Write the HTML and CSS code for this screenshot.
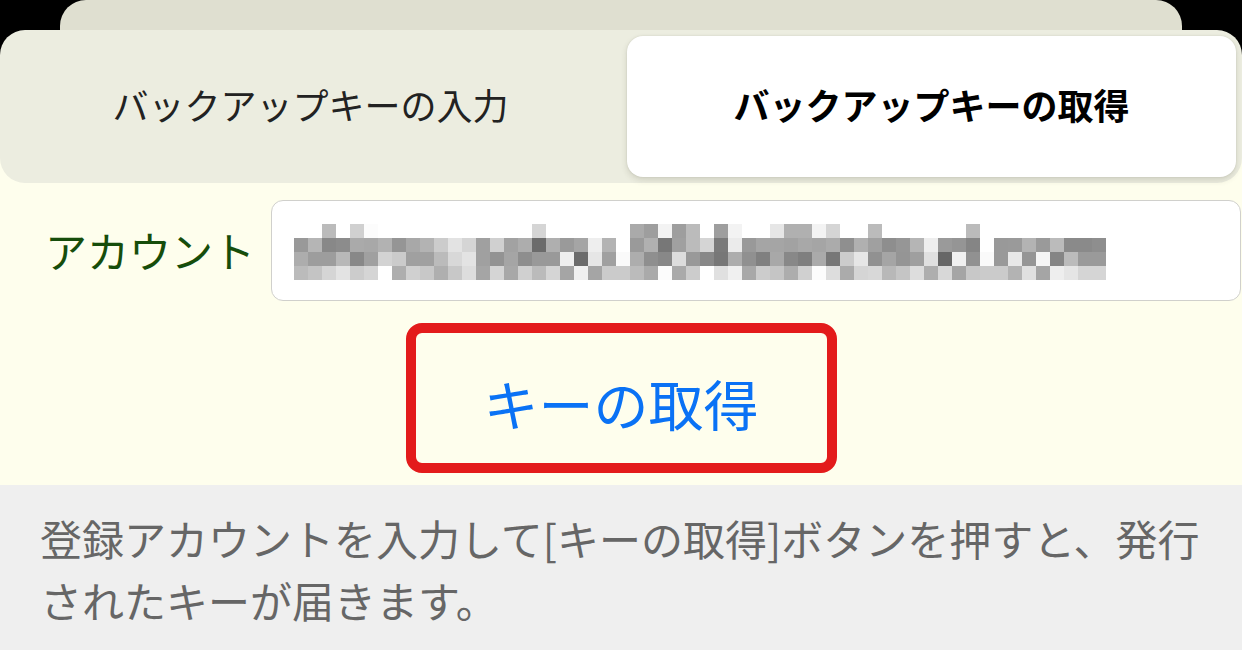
FILE: index.html
```html
<!DOCTYPE html>
<html lang="ja">
<head>
<meta charset="utf-8">
<title>バックアップキーの取得</title>
<link rel="stylesheet" href="styles.css">
</head>
<body>
<div class="backcard"></div>
<div class="tabs-wrap">
  <div class="tabs">
    <div class="tab">バックアップキーの入力</div>
    <div class="tab tab-active">バックアップキーの取得</div>
  </div>
</div>
<section class="form">
  <div class="row">
    <label class="label">アカウント</label>
    <div class="input">
      <svg class="pixels" width="812" height="56" viewBox="0 0 812 56" shape-rendering="crispEdges">
        <g>
          <rect x="28" fill="#bbb"/><rect x="56" fill="#d0d0d0"/><rect x="70" fill="#fcfcfc"/><rect x="238" fill="#d5d5d5"/><rect x="336" fill="#aaa"/><rect x="350" fill="#9e9e9e"/><rect x="364" fill="#f3f3f3"/><rect x="378" fill="#9e9e9e"/><rect x="392" fill="#bbb"/><rect x="420" fill="#9e9e9e"/><rect x="434" fill="#f3f3f3"/><rect x="476" fill="#e6e6e6"/><rect x="490" fill="#b0b0b0"/><rect x="504" fill="#b0b0b0"/><rect x="518" fill="#f3f3f3"/><rect x="532" fill="#d5d5d5"/><rect x="574" fill="#bbb"/><rect x="672" fill="#bbb"/>
        </g>
        <g transform="translate(0,14)">
          <rect x="0" fill="#999"/><rect x="14" fill="#b5b5b5"/><rect x="28" fill="#888"/><rect x="42" fill="#8c8c8c"/><rect x="56" fill="#aaa"/><rect x="70" fill="#a8a8a8"/><rect x="84" fill="#b2b2b2"/><rect x="98" fill="#959595"/><rect x="112" fill="#a8a8a8"/><rect x="126" fill="#b3b3b3"/><rect x="140" fill="#ccc"/><rect x="154" fill="#e3e3e3"/><rect x="168" fill="#d5d5d5"/><rect x="182" fill="#a0a0a0"/><rect x="196" fill="#d0d0d0"/><rect x="210" fill="#a2a2a2"/><rect x="224" fill="#adadad"/><rect x="238" fill="#6b6b6b"/><rect x="252" fill="#afafaf"/><rect x="266" fill="#9a9a9a"/><rect x="280" fill="#a5a5a5"/><rect x="294" fill="#eee"/><rect x="308" fill="#b3b3b3"/><rect x="336" fill="#9a9a9a"/><rect x="350" fill="#b0b0b0"/><rect x="364" fill="#777"/><rect x="378" fill="#a0a0a0"/><rect x="392" fill="#bbb"/><rect x="406" fill="#d5d5d5"/><rect x="420" fill="#7a7a7a"/><rect x="434" fill="#ebebeb"/><rect x="448" fill="#999"/><rect x="462" fill="#a5a5a5"/><rect x="476" fill="#a5a5a5"/><rect x="490" fill="#a2a2a2"/><rect x="504" fill="#a8a8a8"/><rect x="518" fill="#a5a5a5"/><rect x="532" fill="#ababab"/><rect x="546" fill="#8f8f8f"/><rect x="560" fill="#b0b0b0"/><rect x="574" fill="#a0a0a0"/><rect x="588" fill="#8e8e8e"/><rect x="602" fill="#969696"/><rect x="616" fill="#b5b5b5"/><rect x="630" fill="#eee"/><rect x="644" fill="#9a9a9a"/><rect x="658" fill="#959595"/><rect x="672" fill="#858585"/><rect x="700" fill="#999"/><rect x="714" fill="#9a9a9a"/><rect x="728" fill="#b3b3b3"/><rect x="742" fill="#9a9a9a"/><rect x="756" fill="#bbb"/><rect x="770" fill="#8a8a8a"/><rect x="784" fill="#8a8a8a"/><rect x="798" fill="#8e8e8e"/>
        </g>
        <g transform="translate(0,28)">
          <rect x="0" fill="#adadad"/><rect x="14" fill="#9d9d9d"/><rect x="28" fill="#9d9d9d"/><rect x="42" fill="#b8b8b8"/><rect x="56" fill="#888"/><rect x="70" fill="#a0a0a0"/><rect x="84" fill="#d3d3d3"/><rect x="98" fill="#cbcbcb"/><rect x="112" fill="#a0a0a0"/><rect x="126" fill="#a0a0a0"/><rect x="140" fill="#bbb"/><rect x="154" fill="#d8d8d8"/><rect x="168" fill="#e3e3e3"/><rect x="182" fill="#a0a0a0"/><rect x="196" fill="#939393"/><rect x="210" fill="#a5a5a5"/><rect x="224" fill="#8e8e8e"/><rect x="238" fill="#999"/><rect x="252" fill="#999"/><rect x="266" fill="#eee"/><rect x="280" fill="#6b6b6b"/><rect x="294" fill="#e6e6e6"/><rect x="308" fill="#a0a0a0"/><rect x="322" fill="#fafafa"/><rect x="336" fill="#adadad"/><rect x="350" fill="#8f8f8f"/><rect x="364" fill="#888"/><rect x="378" fill="#ddd"/><rect x="392" fill="#999"/><rect x="406" fill="#888"/><rect x="420" fill="#777"/><rect x="434" fill="#adadad"/><rect x="448" fill="#909090"/><rect x="462" fill="#808080"/><rect x="476" fill="#a8a8a8"/><rect x="490" fill="#888"/><rect x="504" fill="#7f7f7f"/><rect x="518" fill="#aaa"/><rect x="532" fill="#777"/><rect x="546" fill="#ccc"/><rect x="560" fill="#e6e6e6"/><rect x="574" fill="#919191"/><rect x="588" fill="#a5a5a5"/><rect x="602" fill="#959595"/><rect x="616" fill="#9f9f9f"/><rect x="630" fill="#e0e0e0"/><rect x="644" fill="#666"/><rect x="658" fill="#f0f0f0"/><rect x="672" fill="#919191"/><rect x="686" fill="#fafafa"/><rect x="700" fill="#999"/><rect x="714" fill="#e8e8e8"/><rect x="728" fill="#959595"/><rect x="742" fill="#f5f5f5"/><rect x="756" fill="#858585"/><rect x="770" fill="#bbb"/><rect x="784" fill="#9a9a9a"/><rect x="798" fill="#9a9a9a"/>
        </g>
        <g transform="translate(0,42)">
          <rect x="0" fill="#bbb"/><rect x="14" fill="#c4c4c4"/><rect x="28" fill="#d5d5d5"/><rect x="42" fill="#e3e3e3"/><rect x="56" fill="#ccc"/><rect x="70" fill="#d5d5d5"/><rect x="98" fill="#aeaeae"/><rect x="112" fill="#d0d0d0"/><rect x="126" fill="#c8c8c8"/><rect x="140" fill="#afafaf"/><rect x="154" fill="#c8c8c8"/><rect x="168" fill="#ddd"/><rect x="182" fill="#a5a5a5"/><rect x="196" fill="#d5d5d5"/><rect x="210" fill="#a8a8a8"/><rect x="224" fill="#d0d0d0"/><rect x="238" fill="#bbb"/><rect x="252" fill="#d5d5d5"/><rect x="266" fill="#a5a5a5"/><rect x="280" fill="#f0f0f0"/><rect x="294" fill="#a5a5a5"/><rect x="308" fill="#cbcbcb"/><rect x="322" fill="#cbcbcb"/><rect x="336" fill="#bbb"/><rect x="350" fill="#aaa"/><rect x="364" fill="#fcfcfc"/><rect x="378" fill="#aaa"/><rect x="392" fill="#ccc"/><rect x="420" fill="#e0e0e0"/><rect x="434" fill="#f0f0f0"/><rect x="448" fill="#a8a8a8"/><rect x="462" fill="#ccc"/><rect x="476" fill="#c5c5c5"/><rect x="490" fill="#adadad"/><rect x="504" fill="#d0d0d0"/><rect x="518" fill="#fcfcfc"/><rect x="532" fill="#ddd"/><rect x="546" fill="#ababab"/><rect x="560" fill="#d5d5d5"/><rect x="574" fill="#d8d8d8"/><rect x="588" fill="#b8b8b8"/><rect x="602" fill="#c5c5c5"/><rect x="616" fill="#ddd"/><rect x="630" fill="#aeaeae"/><rect x="644" fill="#d8d8d8"/><rect x="658" fill="#a5a5a5"/><rect x="672" fill="#c8c8c8"/><rect x="686" fill="#cbcbcb"/><rect x="700" fill="#cbcbcb"/><rect x="714" fill="#b3b3b3"/><rect x="728" fill="#e0e0e0"/><rect x="742" fill="#a5a5a5"/><rect x="756" fill="#eee"/><rect x="770" fill="#e5e5e5"/><rect x="784" fill="#d5d5d5"/><rect x="798" fill="#d5d5d5"/>
        </g>
      </svg>
    </div>
  </div>
  <div class="btn-row">
    <button class="get-key" type="button">キーの取得</button>
  </div>
</section>
<section class="help">
  <p class="help-text">登録アカウントを入力して[キーの取得]ボタンを押すと、発行されたキーが届きます。</p>
</section>
</body>
</html>
```

FILE: styles.css
```css
* {
  box-sizing: border-box;
}

html, body {
  margin: 0;
  padding: 0;
}

body {
  width: 1242px;
  height: 650px;
  overflow: hidden;
  background: #000;
  font-family: "Noto Sans CJK JP", "Noto Sans", sans-serif;
}

.backcard {
  height: 30px;
  margin: 0 60px;
  background: #dfdfd0;
  border-radius: 26px 26px 0 0;
}

.tabs-wrap {
  background: linear-gradient(to bottom, #000 0, #000 50%, #fefeed 50%, #fefeed 100%);
}

.tabs {
  display: grid;
  grid-template-columns: 1fr 1fr;
  column-gap: 12px;
  height: 153px;
  padding: 6px;
  background: #ecede0;
  border-radius: 25px;
}

.tab {
  display: flex;
  align-items: center;
  justify-content: center;
  font-size: 36px;
  color: #222;
  border-radius: 16px;
  padding-bottom: 5px;
}

.tab-active {
  background: #fff;
  color: #000;
  font-weight: 700;
  box-shadow: 0 3px 6px rgba(60, 60, 40, 0.16), 0 0 2px rgba(60, 60, 40, 0.12);
}

.form {
  background: #fefeed;
  padding: 17px 1px 12px 45px;
}

.row {
  display: flex;
  align-items: center;
  gap: 19px;
}

.label {
  font-size: 42px;
  color: #164d0b;
  white-space: nowrap;
  width: 207px;
  padding-bottom: 2px;
}

.input {
  flex: 1;
  height: 101px;
  background: #fff;
  border: 1px solid #d0d0cc;
  border-radius: 12px;
  display: flex;
  align-items: center;
  padding: 3px 0 0 22px;
}

.pixels {
  display: block;
}

.pixels rect {
  width: 14px;
  height: 14px;
}

.btn-row {
  display: flex;
  justify-content: center;
  margin: 22px 0 0 -44px;
}

.get-key {
  width: 431px;
  height: 150px;
  border: 10px solid #e31b1b;
  border-radius: 16px;
  background: transparent;
  font-family: "Noto Sans CJK JP", "Noto Sans", sans-serif;
  font-size: 55px;
  color: #0a72f5;
  padding: 8px 0 0;
  line-height: 1;
}

.help {
  background: #efefef;
  height: 165px;
  padding: 22px 20px 0 40px;
}

.help-text {
  margin: 0;
  font-size: 42px;
  line-height: 62px;
  color: #666;
}
```
